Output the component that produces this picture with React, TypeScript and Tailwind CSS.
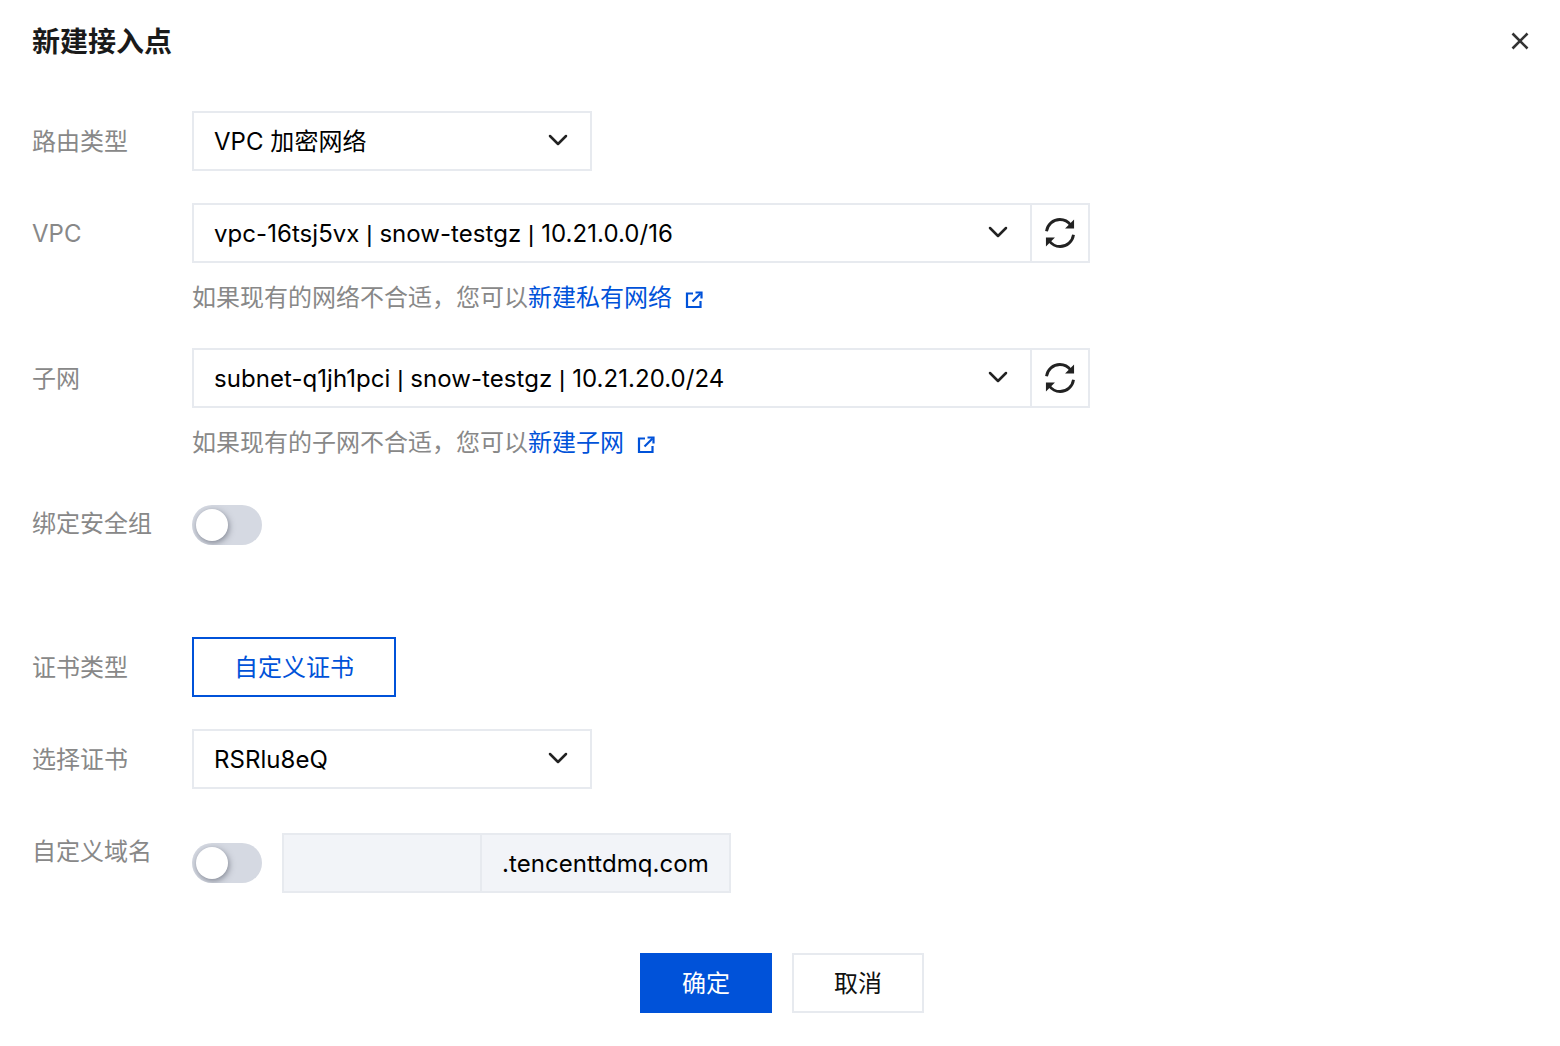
import { FC, ReactNode } from "react";
import { ChevronDown } from "lucide-react";

const font = "font-['Inter','Noto_Sans_CJK_SC',sans-serif]";

const Row: FC<{ label: string; className?: string; labelClassName?: string; children: ReactNode }> = ({
  label,
  className,
  labelClassName,
  children,
}) => (
  <div className={`flex ${className ?? ""}`}>
    <div className={`w-[160px] h-[60px] text-[24px] text-[#888888] shrink-0 ${labelClassName ?? "leading-[62px]"}`}>
      {label}
    </div>
    <div className="min-w-0">{children}</div>
  </div>
);

const Chevron = () => <ChevronDown size={32} strokeWidth={1.9} className="text-[#222222] -mt-[2px]" />;

const Select: FC<{ value: string }> = ({ value }) => (
  <div className="w-[400px] h-[60px] border-2 border-[#e7eaef] flex items-center justify-between pl-[20px] pr-[16px] text-[24px] text-black">
    <span className="pt-[2px] tracking-[0.05px]">{value}</span>
    <Chevron />
  </div>
);

const RefreshIcon = () => (
  <svg width="36" height="36" viewBox="0 0 32 32" fill="none">
    <path d="M4 14.5C4.8 8.6 9.8 4 15.9 4c3.9 0 7.4 1.9 9.6 4.9" stroke="#222" strokeWidth="2.5" />
    <path d="M28 17.5C27.200 23.400 22.200 28 16.100 28c-3.900 0-7.400-1.900-9.600-4.900" stroke="#222" strokeWidth="2.500" />
    <path d="M28.500 4v8h-8z" fill="#222" />
    <path d="M3.500 28v-8h8z" fill="#222" />
  </svg>
);

const LinkIcon = () => (
  <svg width="20" height="20" viewBox="0 0 20 20" fill="none" className="ml-[12px] mt-[4px]">
    <path d="M9 3.500H3V17h13.500v-6" stroke="#0052d9" strokeWidth="2.200" />
    <path d="M8.500 11.500L16.500 3.500" stroke="#0052d9" strokeWidth="2.200" />
    <path d="M11.500 2.500H17.500V8.500" stroke="#0052d9" strokeWidth="2.200" />
  </svg>
);

const Pipe = () => <span className="font-['Liberation_Sans']">|</span>;

const NetworkSelect: FC<{ id: string; cidr: string; hint: string; link: string }> = ({ id, cidr, hint, link }) => (
  <>
    <div className="flex w-[898px] h-[60px] border-2 border-[#e7eaef] text-[24px] text-black">
      <div className="flex-1 flex items-center justify-between pl-[20px] pr-[16px]">
        <span className="pt-[1px] tracking-[0.05px]">
          {id} <Pipe /> snow-testgz <Pipe /> {cidr}
        </span>
        <Chevron />
      </div>
      <div className="w-[58px] border-l-2 border-[#e7eaef] flex items-center justify-center">
        <RefreshIcon />
      </div>
    </div>
    <div className="flex items-center h-[36px] mt-[17px] text-[24px] leading-[36px] text-[#888888]">
      <span>{hint}</span>
      <span className="text-[#0052d9]">{link}</span>
      <LinkIcon />
    </div>
  </>
);

const Toggle = () => (
  <div className="w-[70px] h-[40px] rounded-full bg-[#d5d9e2] relative overflow-hidden">
    <div className="absolute left-[4px] top-[4px] w-[32px] h-[32px] rounded-full bg-white shadow-[1px_2px_6px_rgba(60,65,80,0.55)]" />
  </div>
);

const App: FC = () => {
  return (
    <div className={`w-[1560px] h-[1046px] bg-white px-[32px] overflow-hidden ${font}`}>
      <div className="flex items-center justify-between h-[40px] pt-[22px] box-content">
        <h1 className="text-[28px] font-bold text-[#1a1a1a]">新建接入点</h1>
        <svg width="20" height="20" viewBox="0 0 20 20" fill="none" className="mr-[-2px] -mt-[2px]">
          <path d="M2.500 2.500L17.500 17.500M17.500 2.500L2.500 17.500" stroke="#333" strokeWidth="2.600" />
        </svg>
      </div>

      <Row label="路由类型" className="mt-[49px]">
        <Select value="VPC 加密网络" />
      </Row>
      <Row label="VPC" className="mt-[32px]">
        <NetworkSelect id="vpc-16tsj5vx" cidr="10.21.0.0/16" hint="如果现有的网络不合适，您可以" link="新建私有网络" />
      </Row>
      <Row label="子网" className="mt-[32px]">
        <NetworkSelect id="subnet-q1jh1pci" cidr="10.21.20.0/24" hint="如果现有的子网不合适，您可以" link="新建子网" />
      </Row>
      <Row label="绑定安全组" className="mt-[34px]" labelClassName="leading-[57px]">
        <div className="pt-[10px]">
          <Toggle />
        </div>
      </Row>

      <Row label="证书类型" className="mt-[82px]">
        <div className="w-[204px] h-[60px] border-2 border-[#0052d9] flex items-center justify-center pt-[2px] text-[24px] text-[#0052d9]">
          自定义证书
        </div>
      </Row>
      <Row label="选择证书" className="mt-[32px]">
        <Select value="RSRlu8eQ" />
      </Row>
      <Row label="自定义域名" className="mt-[44px]" labelClassName="leading-[38px]">
        <div className="flex items-center gap-[20px]">
          <Toggle />
          <div className="flex h-[60px] w-[449px] border-2 border-[#e7eaef] bg-[#f2f4f8] text-[24px] text-black">
            <div className="w-[198px] border-r-2 border-[#e7eaef]" />
            <div className="flex-1 flex items-center pl-[20px] pt-[2px] tracking-[0.05px]">.tencenttdmq.com</div>
          </div>
        </div>
      </Row>

      <div className="flex justify-center gap-[20px] mt-[60px] w-[1500px]">
        <button className="w-[132px] h-[60px] pt-[2px] bg-[#0052d9] text-white text-[24px]">确定</button>
        <button className="w-[132px] h-[60px] pt-[2px] border-2 border-[#e7eaef] text-[#111] text-[24px]">取消</button>
      </div>
    </div>
  );
};

export default App;
